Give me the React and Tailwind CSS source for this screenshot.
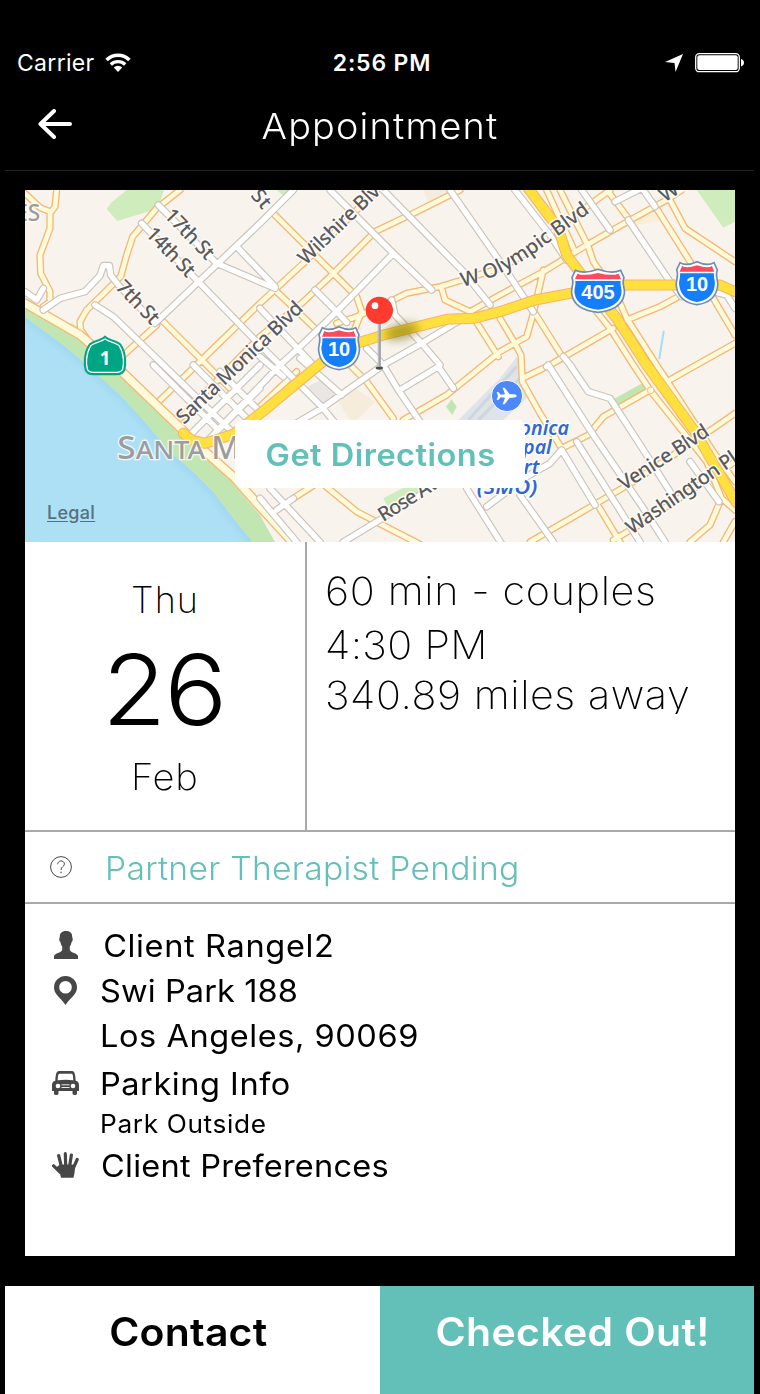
import React from "react";

const yellowRoads = [
  "M15,25 L60,68 L90,80 M110,15 L105,65 L90,85 L90,130 L60,210 L62,265 L90,320 L90,350 L70,365",
  "M480,15 L410,70 L338,155 L320,210 L302,275 L200,375 L180,410 L182,435 L200,460",
  "M410,420 L300,520",
  "M425,405 L640,620",
  "M410,655 L545,525 L720,355 L850,235 L1020,65 L1070,15",
  "M760,85 L940,265 L1010,335 L1025,380 L1005,430",
  "M1320,15 L1190,80 L1065,140 L940,265 L845,355 L720,455 L480,700",
  "M765,315 L885,430",
  "M950,415 L1010,395 L1120,345 L1160,325 L1260,305 L1440,250 L1500,215 L1680,80 L1770,15",
  "M1350,380 L1440,330 L1570,260 L1700,180 L1840,100 L1940,45 L1985,15",
  "M1265,310 L1275,345 L1350,380 L1375,420 L1435,515",
  "M1440,400 L1485,475 L1503,510 L1507,590 L1560,685 L1625,790",
  "M1150,705 L1280,630 L1440,500 L1520,455 L1540,385 L1570,255",
  "M1545,385 L1630,520",
  "M1625,790 L1705,750 L1750,695 L1890,615",
  "M1940,590 L2145,475",
  "M1507,580 L1590,540 L1780,430",
  "M1530,1071 L1730,955 L1840,890 L2080,730 L2145,685",
  "M1780,1065 L1840,1030 L2145,830",
  "M1730,955 L1800,1071",
  "M1580,15 L1660,190",
  "M1620,15 L1705,185 L1720,230 L1790,330 L1820,400 L1910,540 L2080,800 L2145,890",
  "M1690,330 L1770,430 L1840,540 L1890,615 L2060,830 L2105,940 L2145,975",
  "M1820,405 L1920,365 L1975,335",
  "M1765,20 L1825,100",
  "M1900,55 L2010,230 L2080,340 L2145,450",
  "M1950,45 L1995,130 L2145,230",
  "M990,540 L1040,590 L1120,700",
  "M900,890 L1010,980 L1200,1078",
  "M820,940 L890,895",
  "M720,665 L830,560",
  "M2100,950 L2070,1020 L2010,1071 M2145,1010 L2110,1071",
];

const whiteRoads = [
  "M410,410 L720,115 L820,15",
  "M415,60 L590,235 L765,310",
  "M365,115 L535,290 L700,460 L780,540 L905,665 L950,720",
  "M650,185 L765,305",
  "M720,370 L875,535",
  "M15,320 L50,345 L70,310 M70,375 L120,340 L195,320 L240,272 L250,242 L268,242 L272,270 L295,300 L405,415",
  "M225,360 L280,395 L430,540 L620,725 L700,800",
  "M885,315 L950,380 L980,412",
  "M1120,205 L950,380 L835,490 L780,540 L560,770",
  "M930,15 L1120,205 L1235,315",
  "M1090,15 L1330,260 L1410,360",
  "M1290,15 L1440,230 L1540,380",
  "M1115,345 L1125,390 L1205,475 L1260,540",
  "M1330,400 L1205,475 L1090,540 L905,670 L820,720",
  "M1040,490 L1090,540 L1135,615 L1200,710",
  "M1140,615 L1255,545 L1300,610",
  "M840,520 L965,630",
  "M720,515 L790,575",
  "M400,540 L590,730",
  "M520,540 L680,700",
  "M510,750 L720,540",
  "M560,770 L720,610",
  "M600,560 L720,680",
  "M750,910 L900,1071 M720,940 L830,1071",
  "M770,975 L820,940",
  "M970,1071 L1070,1010 L1200,930",
  "M1340,910 L1450,1085 M1400,965 L1520,875 L1590,835 L1625,795 L1725,960",
  "M1500,930 L1600,1071",
  "M1650,540 L1705,620 L1770,640 L1880,810 L1950,920",
  "M1585,540 L1720,750 L1870,970 L1935,1071",
  "M1670,770 L1860,1071",
  "M2010,830 L2097,950",
  "M1485,15 L1590,150 L1640,225",
  "M1685,15 L1770,135",
  "M1785,50 L1860,12 M1870,15 L1905,65",
  "M1825,105 L1950,290 L1985,335 L2080,320 L2120,330 L2145,370",
  "M1630,515 L1655,545 M1585,540 L1580,545",
];

const coast = "M15,355 L180,450 L290,545 L430,680 L550,795 L640,875 L720,965 L830,1085";
const freeway10 =
  "M490,745 L515,765 L555,775 L640,748 L740,670 L890,545 L945,500 L1010,475 L1090,450 L1280,403 L1360,400 L1440,380 L1545,345 L1650,325 L1820,300 L2100,300 L2145,320";
const freeway405 = "M1525,10 L1615,130 L1640,210 L1670,250 L1790,400 L1880,540 L2025,740 L2150,955";

function Roads({ paths, casing, fill, outer, inner }) {
  return (
    <g fill="none" strokeLinecap="round" strokeLinejoin="round">
      <path d={paths.join(" ")} stroke={casing} strokeWidth={outer} />
      <path d={paths.join(" ")} stroke={fill} strokeWidth={inner} />
    </g>
  );
}

function Shield({ x, y, w, label }) {
  const h = w / 2;
  const outline = `M${-h + 14},-62 Q${-h / 2},-50 0,-65 Q${h / 2},-50 ${h - 14},-62 L${h - 4},-40 C${h - 12},-22 ${h},-8 ${h - 3},8 C${h - 8},45 ${h * 0.5},60 0,64 C${-h * 0.5},60 ${-h + 8},45 ${-h + 3},8 C${-h},-8 ${-h + 12},-22 ${-h + 4},-40 Z`;
  return (
    <g transform={`translate(${x} ${y})`}>
      <path d={outline} fill="#fff" stroke="#6f8bb5" strokeWidth="5" />
      <path
        d={`M${-h + 14},-30 L${h - 14},-30 C${h - 16},-14 ${h - 9},-6 ${h - 12},8 C${h - 16},36 ${h * 0.45},52 0,56 C${-h * 0.45},52 ${-h + 16},36 ${-h + 12},8 C${-h + 9},-6 ${-h + 16},-14 ${-h + 14},-30 Z`}
        fill="#147efb"
      />
      <path d={`M${-h + 20},-52 Q${-h / 2},-44 0,-54 Q${h / 2},-44 ${h - 20},-52 L${h - 13},-35 L${-h + 13},-35 Z`} fill="#fc4b5d" />
      <text y="24" textAnchor="middle" fontSize="60" fontWeight="700" fill="#fff" fontFamily="Liberation Sans, sans-serif">
        {label}
      </text>
    </g>
  );
}

function StreetLabel({ x, y, angle, length, children }) {
  return (
    <text transform={`translate(${x} ${y}) rotate(${angle})`} textLength={length}>
      {children}
    </text>
  );
}

function AreaMap() {
  return (
    <svg viewBox="15 15 2130 1056" className="block h-[352px] w-[710px]">
      <defs>
        <filter id="soft" x="-50%" y="-50%" width="200%" height="200%">
          <feGaussianBlur stdDeviation="14" />
        </filter>
        <filter id="shore" x="-20%" y="-20%" width="140%" height="140%">
          <feGaussianBlur stdDeviation="12" />
        </filter>
        <path id="olympic" d="M1328,305 C1440,280 1520,222 1600,163 L1760,46" />
      </defs>
      <rect x="15" y="15" width="2130" height="1056" fill="#f8f4ed" />
      <path d="M15,395 L130,480 L190,530 L300,630 L370,705 L450,800 L520,860 L580,920 L640,1000 L700,1071 L15,1071 Z" fill="#ade0f5" />
      <path d="M0,385 L130,480 L190,530 L300,630 L370,705 L450,800 L520,860 L580,920 L640,1000 L710,1085" fill="none" stroke="#98d2ec" strokeWidth="16" filter="url(#shore)" />
      <path d="M15,365 L180,450 L290,550 L400,660 L480,750 L555,812 L625,880 L720,990 L765,1071 L697,1071 L640,1000 L580,920 L520,860 L450,800 L370,705 L300,630 L190,530 L130,480 L15,397 Z" fill="#c2e6b2" />
      <path d="M143,420 L155,415 L175,428 L178,445 Z" fill="#c2e6b2" />
      <g fill="#cfecbd">
        <path d="M320,15 L275,52 L260,72 L292,108 L400,75 L420,50 L432,15 Z" />
        <path d="M770,15 L790,32 L815,15 Z" />
        <path d="M2030,15 L2110,128 L2145,110 L2145,15 Z" />
        <path d="M1090,940 L1150,908 L1220,908 L1200,925 L1105,970 Z" />
      </g>
      <path d="M1780,643 L1868,594 L1880,618 L1800,660 Z" fill="#c2e6b2" />
      <path d="M1295,643 L1310,665 L1297,690 L1278,665 Z" fill="#c2e6b2" />
      <path d="M850,610 L905,585 L955,635 L905,665 Z" fill="#e9e7e4" />
      <path d="M955,650 L1005,610 L1065,650 L1010,705 L990,705 Z" fill="#f5ecdc" />
      <path d="M1800,130 L1900,80 L1915,108 Z" fill="#f8efd6" />
      <path d="M1210,15 L1290,15 L1225,53 Z" fill="#f4ecdd" />
      <path d="M1315,705 L1440,580 L1490,515 L1520,590 L1520,640 L1450,705 Z" fill="#dfe4e9" />
      <path d="M1345,705 L1490,545 M1375,705 L1500,580" stroke="#ced6de" strokeWidth="10" />

      <Roads paths={yellowRoads} casing="#f5b777" fill="#fffad9" outer={22} inner={14} />
      <Roads paths={[coast]} casing="#f5b777" fill="#fffad9" outer={30} inner={22} />
      <Roads paths={whiteRoads} casing="#cbc4bc" fill="#ffffff" outer={23} inner={16} />
      <Roads paths={[freeway10, freeway405]} casing="#f7b26c" fill="#ffe03e" outer={33} inner={27} />
      <circle cx="1892" cy="616" r="10" fill="#fffad9" stroke="#f6bc81" strokeWidth="3" />
      <path d="M1931,440 L1918,520" stroke="#a5dcf3" strokeWidth="6" strokeLinecap="round" />

      <ellipse cx="1145" cy="440" rx="52" ry="24" fill="#6b5d00" opacity="0.5" transform="rotate(-14 1145 440)" filter="url(#soft)" />

      <g fill="#5a5a5d" stroke="#fdfbf7" strokeWidth="9" strokeLinejoin="round" paintOrder="stroke" fontFamily="Noto Sans, sans-serif" fontWeight="500" fontSize="60">
        <StreetLabel x={430} y={94} angle={46} length={186}>17th St</StreetLabel>
        <StreetLabel x={374} y={149} angle={46} length={183}>14th St</StreetLabel>
        <StreetLabel x={284} y={309} angle={46} length={158}>7th St</StreetLabel>
        <StreetLabel x={690} y={32} angle={50} length={58}>St</StreetLabel>
        <StreetLabel x={857} y={242} angle={-44} length={352}>Wilshire Blvd</StreetLabel>
        <StreetLabel x={492} y={720} angle={-43.8} length={500}>Santa Monica Blvd</StreetLabel>
        <StreetLabel x={1090} y={1012} angle={-32} length={232}>Rose Ave</StreetLabel>
        <StreetLabel x={1812} y={918} angle={-33} length={310}>Venice Blvd</StreetLabel>
        <StreetLabel x={1835} y={1050} angle={-34.5} length={390}>Washington Pl</StreetLabel>
        <StreetLabel x={1934} y={53} angle={-33} length={290}>W Pico Blvd</StreetLabel>
        <text>
          <textPath href="#olympic" textLength="447">W Olympic Blvd</textPath>
        </text>
      </g>
      <g fill="#9c9c9c" stroke="#ffffff" strokeOpacity="0.8" strokeWidth="8" paintOrder="stroke" fontFamily="Noto Sans, sans-serif" fontWeight="500">
        <text x="61" y="108" textAnchor="end" fontSize="68">ES</text>
        <text x="292" y="822" fontSize="96" textLength="264" lengthAdjust="spacingAndGlyphs">
          S<tspan fontSize="78">ANTA</tspan>
        </text>
        <text x="574" y="822" fontSize="96">
          M<tspan fontSize="78">ONICA</tspan>
        </text>
      </g>
      <g fill="#2f66d8" stroke="#ffffff" strokeWidth="8" paintOrder="stroke" fontFamily="Noto Sans, sans-serif" fontSize="57" fontWeight="600" fontStyle="italic" textAnchor="middle">
        <text x="1461" y="749" textLength="372" lengthAdjust="spacingAndGlyphs">Santa Monica</text>
        <text x="1461" y="808" textLength="268" lengthAdjust="spacingAndGlyphs">Municipal</text>
        <text x="1461" y="868" textLength="194" lengthAdjust="spacingAndGlyphs">Airport</text>
        <text x="1461" y="926" textLength="182" lengthAdjust="spacingAndGlyphs">(SMO)</text>
      </g>

      <g transform="translate(1461 633)">
        <circle r="47" fill="#4d88f8" stroke="#fff" strokeWidth="3" />
        <path d="M29,0 C29,-4 22,-5 16,-5 L8,-5 L-7,-25 L-13,-25 L-6,-5 L-19,-4 L-26,-12 L-31,-12 L-27,0 L-31,12 L-26,12 L-19,4 L-6,5 L-13,25 L-7,25 L8,5 L16,5 C22,5 29,4 29,0 Z" fill="#fff" />
      </g>

      <g transform="translate(255 515)">
        <path d="M0,-60 C14,-48 38,-46 46,-36 C64,-10 62,26 58,40 C54,52 44,53 34,53 L-34,53 C-44,53 -54,52 -58,40 C-62,26 -64,-10 -46,-36 C-38,-46 -14,-48 0,-60 Z" fill="#00a583" stroke="#00a583" strokeWidth="6" />
        <path d="M0,-53 C14,-43 36,-41 43,-32 C58,-8 57,24 53,37 C50,46 43,47 34,47 L-34,47 C-43,47 -50,46 -53,37 C-57,24 -58,-8 -43,-32 C-36,-41 -14,-43 0,-53 Z" fill="none" stroke="#fff" strokeWidth="4" />
        <text y="26" textAnchor="middle" fontSize="56" fontWeight="700" fill="#fff" fontFamily="Noto Sans, sans-serif">1</text>
      </g>
      <Shield x={957} y={490} w={128} label="10" />
      <Shield x={1734} y={318} w={164} label="405" />
      <Shield x={2031} y={295} w={130} label="10" />

      <ellipse cx="1078" cy="549" rx="11" ry="5" fill="#4a4a4a" />
      <path d="M1078,410 L1078,546" stroke="#9a9da1" strokeWidth="9" />
      <path d="M1076,412 L1076,544" stroke="#c2c5c8" strokeWidth="3" />
      <circle cx="1078" cy="376" r="41" fill="#ff3b30" />
      <circle cx="1065" cy="362" r="10" fill="#fff" />
    </svg>
  );
}

function StatusBar() {
  return (
    <div className="flex h-11 items-center pt-[3px] pr-4 pl-[17px] text-[23px]">
      <div className="flex flex-1 items-center gap-[10px]">
        <span className="tracking-[0.3px]">Carrier</span>
        <svg viewBox="0 0 26 19" className="mb-[3px] h-[19px] w-[26px]" fill="none" stroke="#fff">
          <path d="M1.6,7 A16,16 0 0 1 24.400,7" strokeWidth="3.6" />
          <path d="M5.800,11.500 A10.500,10.500 0 0 1 20.200,11.500" strokeWidth="3.400" />
          <path d="M13,19 L8.800,14.500 A6.200,6.200 0 0 1 17.200,14.500 Z" fill="#fff" stroke="none" />
        </svg>
      </div>
      <span className="ml-[3px] font-semibold tracking-[0.8px]">2:56 PM</span>
      <div className="flex flex-1 items-center justify-end gap-3 pb-[2px]">
        <svg viewBox="0 0 18 18" className="h-[18px] w-[18px]">
          <path d="M18,0 L10.500,18 L9.500,9 L0,8 Z" fill="#fff" />
        </svg>
        <svg viewBox="0 0 49 20" className="h-5 w-[49px]">
          <rect x="0.700" y="0.700" width="43.600" height="18" rx="3.500" fill="none" stroke="#fff" strokeWidth="1.300" />
          <rect x="2.300" y="2.300" width="40.400" height="14.800" rx="2" fill="#fff" />
          <path d="M46,6 Q49,7 49,9.700 Q49,12.400 46,13.400 Z" fill="#fff" />
        </svg>
      </div>
    </div>
  );
}

const icons = {
  person: (
    <svg viewBox="0 0 24 28" className="-mt-px h-7 w-6" fill="#474747">
      <path d="M12,0 C16.500,0 18.300,2.500 18.200,6 L18.700,7.500 C19,9 18.300,10.500 17.600,11 C17.200,13.500 16.500,14.500 15.800,15.500 L15.800,19 C17,22 23,22 24,25 L24,28 L0,28 L0,25 C1,22 7,22 8.200,19 L8.200,15.500 C7.500,14.500 6.800,13.500 6.400,11 C5.700,10.500 5,9 5.300,7.500 L5.800,6 C5.700,2.500 7.500,0 12,0 Z" />
    </svg>
  ),
  place: (
    <svg viewBox="0 0 23 29" className="-mt-px h-[29px] w-[23px]" fill="#474747">
      <path fillRule="evenodd" d="M11.500,0 A11.500,11.500 0 0 1 23,11.500 C23,18.500 16,22 11.500,29 C7,22 0,18.500 0,11.500 A11.500,11.500 0 0 1 11.500,0 Z M11.500,4.900 A6.300,6.300 0 1 0 11.500,17.500 A6.300,6.300 0 1 0 11.500,4.900 Z" />
    </svg>
  ),
  car: (
    <svg viewBox="0 0 27 24" className="-mt-px h-6 w-[27px]" fill="#474747">
      <path fillRule="evenodd" d="M7,0 L20,0 C22.500,0 23.300,3 23.700,9.700 C26,10.300 27,11.500 27,14 L27,20 L25,20 L25,22.500 Q25,24 23,24 Q20.500,24 20.500,22.500 L20.500,20 L6.500,20 L6.500,22.500 Q6.500,24 4,24 Q2,24 2,22.500 L2,20 L0,20 L0,14 C0,11.500 1,10.300 3.300,9.700 C3.700,3 4.500,0 7,0 Z M7.500,2.800 C6,2.800 5.900,5 5.700,9.300 Q13.500,8.300 21.300,9.300 C21.100,5 21,2.800 19.500,2.800 Z" />
      <circle cx="6" cy="15" r="2.300" fill="#fff" />
      <circle cx="21" cy="15" r="2.300" fill="#fff" />
      <path d="M9.500,13.800 H17.500 M9.500,16.500 H17.500" stroke="#fff" strokeWidth="0.900" />
    </svg>
  ),
  hand: (
    <svg viewBox="0 0 27 26" className="-mt-px h-[26px] w-[27px]" fill="none" stroke="#474747" strokeLinecap="round">
      <path d="M9,25.800 L8,21.500 L3.500,16 L6,14 L8,12.500 L20.500,12.500 L23,15 L22.500,21 L21.500,25.800 Z" fill="#474747" stroke="none" />
      <path d="M1.600,13.800 L8,20 M6.700,3.600 L9.700,16 M13.300,1.700 L13.700,14 M19.400,3 L17.500,15 M25.200,7.500 L20.700,17.500" strokeWidth="3.200" />
    </svg>
  ),
};

function InfoRow({ icon, children, className }) {
  return (
    <div className={`flex items-center ${className}`}>
      <div className="-mt-px flex w-[81px] shrink-0 justify-center">{icon}</div>
      <span className="-ml-[6px] origin-left scale-x-[1.05]">{children}</span>
    </div>
  );
}

export default function App() {
  return (
    <div className="flex h-[1394px] w-[760px] flex-col bg-black font-['Inter',sans-serif] text-white">
      <div className="pt-10">
        <StatusBar />
      </div>
      <header className="mr-[6px] ml-[5px] grid h-[87px] grid-cols-[100px_1fr_100px] items-center border-b border-[#222222] pb-[3px]">
        <svg viewBox="0 0 34 30" className="mb-[3px] ml-[33px] h-[30px] w-[34px]" fill="none" stroke="#fff" strokeWidth="4" strokeLinecap="round" strokeLinejoin="round">
          <path d="M16,2 L2.500,15 L16,28 M3,15 H32" />
        </svg>
        <h1 className="scale-x-[1.05] pl-px text-center text-[36px] font-light tracking-[1.1px]">Appointment</h1>
      </header>

      <main className="mx-[25px] mt-[19px] flex h-[1066px] flex-col bg-white text-black">
        <div className="relative h-[352px] overflow-hidden">
          <AreaMap />
          <span className="absolute top-[311px] left-[22px] text-[18px] leading-6 font-medium tracking-[0.3px] text-[#56707c] underline underline-offset-2">Legal</span>
          <button className="absolute top-[230px] left-[210px] flex h-[68px] w-[290px] items-center justify-center rounded-lg bg-white pt-[2px] pl-[2px] text-[31px] font-semibold tracking-[0.45px] text-[#63c0b8]">
            <span className="scale-x-[1.05]">Get Directions</span>
          </button>
        </div>

        <section className="flex h-[290px] border-b-2 border-[#a9a9a9]">
          <div className="flex w-[282px] flex-col items-center border-r-2 border-[#a9a9a9] pt-9 font-extralight">
            <span className="text-[36px] leading-[44px] tracking-[1px]">Thu</span>
            <span className="mt-[20px] mr-[3px] scale-x-[1.07] text-[98px] leading-[96px] font-light tracking-[-2px]">26</span>
            <span className="mt-[17px] scale-x-[1.06] text-[36px] leading-[44px] tracking-[0.6px]">Feb</span>
          </div>
          <div className="flex origin-left scale-x-[1.06] flex-col pt-6 pl-[17px] text-[39px] font-extralight">
            <span className="h-[54px] leading-[50px] tracking-[0.6px]">60 min - couples</span>
            <span className="h-[50px] leading-[50px] tracking-[0.3px]">4:30 PM</span>
            <span className="h-[44px] overflow-hidden leading-[50px] tracking-[0.52px]">340.89 miles away</span>
          </div>
        </section>

        <section className="flex h-[72px] items-center border-b-2 border-[#a9a9a9] pl-[25px]">
          <svg viewBox="0 0 22 22" className="h-[22px] w-[22px]" fill="none" stroke="#474747" strokeWidth="1">
            <circle cx="11" cy="11" r="10.400" />
            <path d="M7.700,8.300 C7.700,3.800 14.500,3.900 14.400,8.200 C14.300,10.700 11,10.500 11,14" />
            <path d="M11,15.700 V17" strokeWidth="1.300" />
          </svg>
          <span className="mt-[3px] ml-[33px] origin-left scale-x-[1.05] text-[32px] leading-10 font-light tracking-[0.28px] text-[#63c0b8]">Partner Therapist Pending</span>
        </section>

        <section className="flex flex-col pt-5 text-[31px]">
          <InfoRow icon={icons.person} className="h-[44px] tracking-[0.6px]">
            <span className="ml-[3px]">Client Rangel2</span>
          </InfoRow>
          <InfoRow icon={icons.place} className="h-[46px] tracking-[0.08px]">Swi Park 188</InfoRow>
          <InfoRow className="h-[45px] tracking-[0.52px]">Los Angeles, 90069</InfoRow>
          <InfoRow icon={icons.car} className="h-[50px] tracking-[0.5px]">Parking Info</InfoRow>
          <InfoRow className="h-[32px] text-[25px] tracking-[0.6px]">Park Outside</InfoRow>
          <InfoRow icon={icons.hand} className="h-[50px] tracking-[0.22px]">
            <span className="ml-px">Client Preferences</span>
          </InfoRow>
        </section>
      </main>

      <footer className="mt-[30px] mr-[6px] ml-[5px] flex h-[108px] text-[39px] font-semibold">
        <button className="flex w-[375px] items-center justify-center bg-white pr-[9px] pb-[16px] text-black">
          <span className="scale-x-[1.05] tracking-[0.2px]">Contact</span>
        </button>
        <button className="flex flex-1 items-center justify-center bg-[#63c0b8] pb-[16px] pl-[11px] text-white">
          <span className="scale-x-[1.05] tracking-[0.35px]">Checked Out!</span>
        </button>
      </footer>
    </div>
  );
}
